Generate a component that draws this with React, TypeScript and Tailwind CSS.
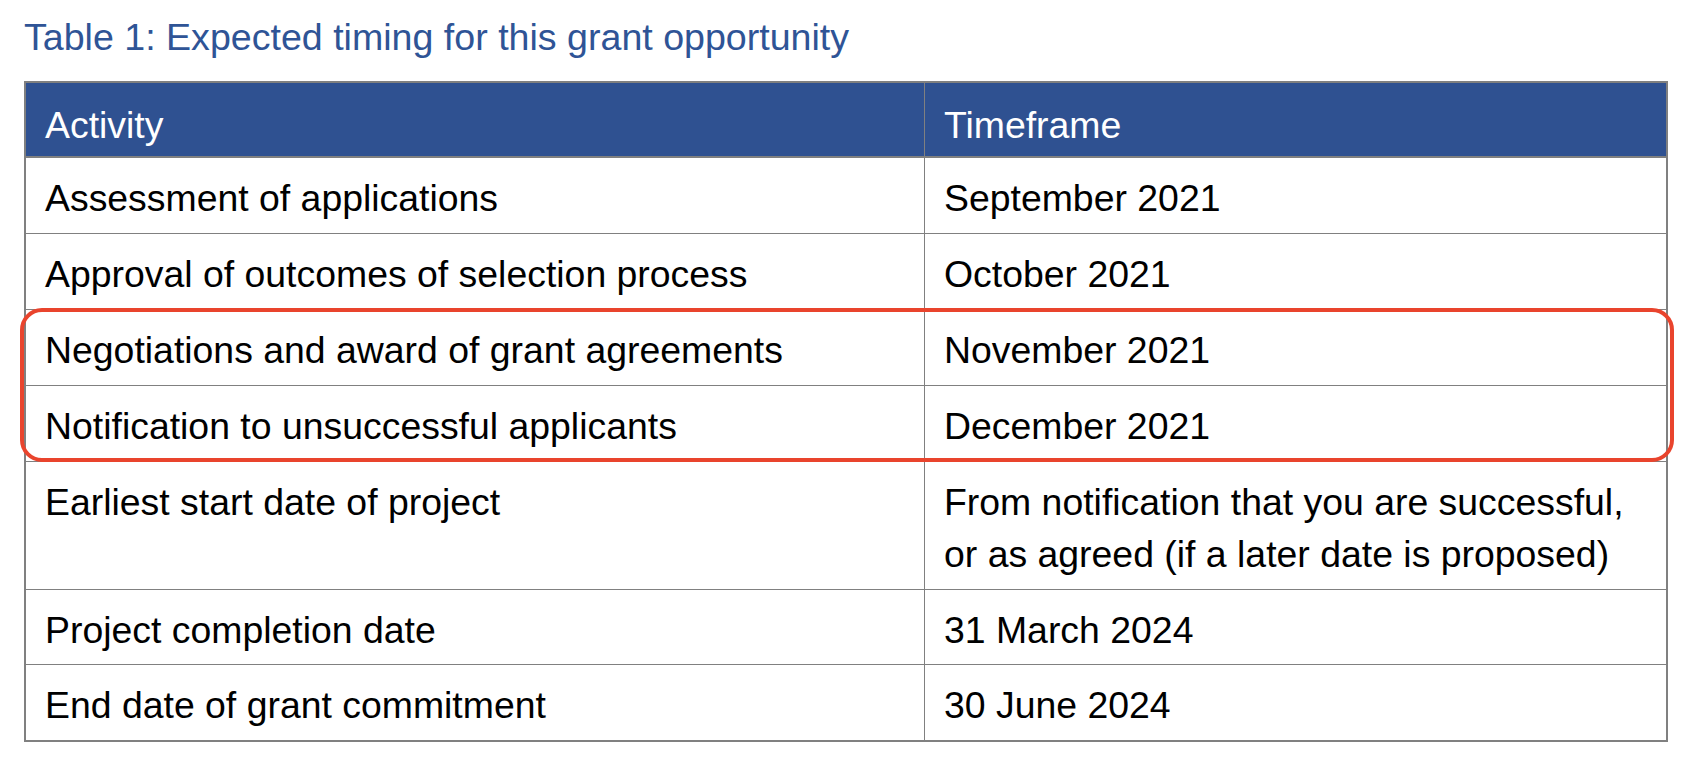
import React from "react";

const rows: { a: string; t: string[] }[] = [
  { a: "Assessment of applications", t: ["September 2021"] },
  { a: "Approval of outcomes of selection process", t: ["October 2021"] },
  { a: "Negotiations and award of grant agreements", t: ["November 2021"] },
  { a: "Notification to unsuccessful applicants", t: ["December 2021"] },
  {
    a: "Earliest start date of project",
    t: ["From notification that you are successful,", "or as agreed (if a later date is proposed)"],
  },
  { a: "Project completion date", t: ["31 March 2024"] },
  { a: "End date of grant commitment", t: ["30 June 2024"] },
];

const heights = ["h-[76px]", "h-[76px]", "h-[76px]", "h-[76px]", "h-[128px]", "h-[75px]", "h-[75px]"];

export default function App() {
  return (
    <div
      className="relative w-[1704px] h-[770px] bg-white text-black"
      style={{ fontFamily: '"Liberation Sans", Arial, sans-serif' }}
    >
      <div className="pt-[16px] pl-[24px] text-[37.6px] leading-[42px] text-[#2F5496]">
        Table 1: Expected timing for this grant opportunity
      </div>
      <div className="mt-[23px] ml-[24px] w-[1644px] border-2 border-[#808080] text-[37.4px] leading-[52px]">
        <div className="grid grid-cols-[898px_1fr] h-[73px] bg-[#2F5191] text-white">
          <div className="pt-[16px] pl-[19px]">Activity</div>
          <div className="pt-[16px] pl-[19px] border-l border-[#808080]">Timeframe</div>
        </div>
        <div className="h-[2px] bg-[#808080]" />
        {rows.map((r, i) => (
          <div
            key={i}
            className={`grid grid-cols-[898px_1fr] ${heights[i]} ${i < rows.length - 1 ? "border-b border-[#808080]" : ""}`}
          >
            <div className="pt-[14px] pl-[19px]">{r.a}</div>
            <div className="pt-[14px] pl-[19px] border-l border-[#808080]">
              {r.t.map((l, j) => (
                <div key={j}>{l}</div>
              ))}
            </div>
          </div>
        ))}
      </div>
      <div className="absolute left-[20px] top-[308px] w-[1654px] h-[154px] border-4 border-[#E9442D] rounded-[22px]" />
    </div>
  );
}
